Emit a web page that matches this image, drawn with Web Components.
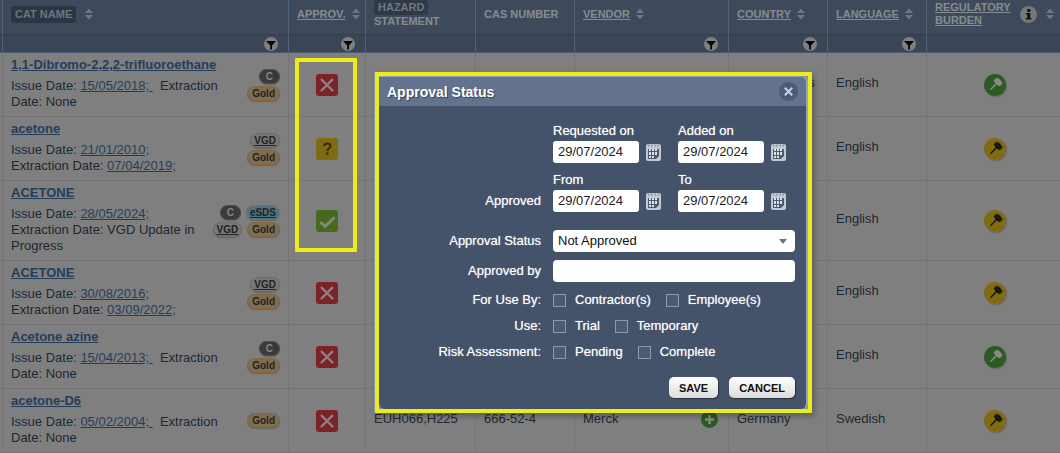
<!DOCTYPE html>
<html lang="en">
<head>
<meta charset="utf-8">
<title>Approval Status</title>
<style>
    body
    {
        margin: 0;
        background: #7f7f7f;
        font: 13px/16px "Liberation Sans", Arial, sans-serif;
        color: #1e2833;
        overflow: hidden;
    }
</style>
</head>
<body>
<app-view></app-view>
<script>
// Small rounded tag shown at the right of a product name
class TagPill extends HTMLElement
{
    constructor()
    {
        super();
        this.root = this.attachShadow({mode: "open"});
    }
    connectedCallback()
    {
        this.root.innerHTML = `
            <style>
                :host
                {
                    display: block;
                    box-sizing: border-box;
                    height: 15px;
                    padding: 0 4px;
                    border: 1px solid #6c6c6c;
                    border-radius: 8px;
                    background: #777;
                    color: #222;
                    font-size: 10px;
                    font-weight: bold;
                    line-height: 13px;
                    box-shadow: 0 1px 1px rgba(0, 0, 0, 0.2);
                }
                :host([kind="C"]) { background: #3a3a3a; border-color: #4a4a4a; color: #858585; padding: 0 6px; }
                :host([kind="Gold"]) { background: #7d6e50; border-color: #8a6243; }
                :host([kind="eSDS"]) { background: #4d7480; border-color: #5f7a84; text-decoration: underline; padding: 0 3px; }
                :host([kind="VGD"]) { text-decoration: underline; padding: 0 3px; }
            </style>
            <slot></slot>
        `;
    }
}

// Square approval state icon
class ApprovalIcon extends HTMLElement
{
    constructor()
    {
        super();
        this.root = this.attachShadow({mode: "open"});
    }
    connectedCallback()
    {
        const icons = {
            no: `<rect width="22" height="22" rx="3" fill="#7d2328"/>
                 <path d="M5 5L17 17M17 5L5 17" stroke="#8e8383" stroke-width="2.4"/>`,
            ask: `<rect width="22" height="22" rx="3" fill="#806c10"/>
                 <path d="M8 8.2Q8.2 5.6 11.2 5.6Q14.4 5.6 14.4 8Q14.4 9.4 12.9 10.5Q11.4 11.5 11.4 13" fill="none" stroke="#332c10" stroke-width="2"/>
                 <rect x="10.2" y="14.4" width="2.3" height="2.3" fill="#332c10"/>`,
            yes: `<rect width="22" height="22" rx="3" fill="#446b20"/>
                 <path d="M4.5 12L9 16.5L18.5 7.5" fill="none" stroke="#858b80" stroke-width="2.8"/>`
        };
        this.root.innerHTML = `
            <style>
                :host { display: block; width: 22px; height: 22px; margin: 0 auto; }
                svg { display: block; }
            </style>
            <svg width="22" height="22">${icons[this.getAttribute("state")]}</svg>
        `;
    }
}

// Round gavel icon
class BurdenIcon extends HTMLElement
{
    constructor()
    {
        super();
        this.root = this.attachShadow({mode: "open"});
    }
    connectedCallback()
    {
        const low = this.getAttribute("level") === "low";
        const fill = low ? "#2b5a22" : "#806c10";
        const ink = low ? "#858b82" : "#1b1808";
        this.root.innerHTML = `
            <style>
                :host { display: block; width: 22px; height: 22px; margin: 0 auto; border-radius: 50%; box-shadow: 1px 1px 1px rgba(0, 0, 0, 0.2); }
                svg { display: block; }
            </style>
            <svg width="22" height="22">
                <circle cx="11" cy="11" r="11" fill="${fill}"/>
                <path d="M6.4 15.8L13 9" stroke="${ink}" stroke-width="1.6"/>
                <path d="M9.4 6.6L12.8 3.4L14.2 4.6L14.8 4.6L17.4 7.2L17.4 7.8L18.8 9.2L15.6 12.6L14.2 11.2L13.6 11.2L10.8 8.4L10.8 8Z" fill="${ink}"/>
            </svg>
        `;
    }
}

// Column heading: label, optional info button, sort arrows
class ColumnHead extends HTMLElement
{
    constructor()
    {
        super();
        this.root = this.attachShadow({mode: "open"});
    }
    connectedCallback()
    {
        const info = this.hasAttribute("info") ? `
            <svg class="info" width="17" height="17">
                <circle cx="8.5" cy="8.5" r="8.5" fill="#777"/>
                <circle cx="8.8" cy="4.4" r="1.7" fill="#111"/>
                <path d="M6 7H10.3V12H11.4V13.6H5.9V12H7.2V8.6H6Z" fill="#111"/>
            </svg>` : "";
        const sort = this.hasAttribute("sort") ? `
            <svg width="8" height="12">
                <path d="M0 5L4 0.5L8 5ZM0 7L4 11.5L8 7Z" fill="#68788a"/>
            </svg>` : "";
        this.root.innerHTML = `
            <style>
                :host { display: flex; align-items: center; gap: 6px; font-size: 11px; line-height: 13px; }
                :host([wide]) { gap: 9px; }
                svg { display: block; flex: none; }
            </style>
            <slot></slot>${info}${sort}
        `;
    }
}

class FilterButton extends HTMLElement
{
    constructor()
    {
        super();
        this.root = this.attachShadow({mode: "open"});
    }
    connectedCallback()
    {
        this.root.innerHTML = `
            <style>
                :host { display: block; width: 14px; height: 14px; margin-left: auto; }
                button { display: block; padding: 0; border: 0; background: none; }
                svg { display: block; }
            </style>
            <button type="button" aria-label="Filter">
                <svg width="14" height="14">
                    <circle cx="7" cy="7" r="7" fill="#7f7f7f"/>
                    <path d="M2 4H12L8 8.4V12.4H6.2V8.4Z" fill="#050505"/>
                </svg>
            </button>
        `;
    }
}

// Product list
class ProductTable extends HTMLElement
{
    constructor()
    {
        super();
        this.root = this.attachShadow({mode: "open"});
    }
    connectedCallback()
    {
        const link = (text) => `<a href="#">${text}</a>`;
        const rows = [
            {
                name: "1,1-Dibromo-2,2,2-trifluoroethane",
                dates: `Issue Date: ${link("15/05/2018;&nbsp;")} &nbsp;Extraction<br>Date: None`,
                tags: [["C"], ["Gold"]], state: "no", country: "United States", language: "English", level: "low"
            },
            {
                name: "acetone",
                dates: `Issue Date: ${link("21/01/2010;")}<br>Extraction Date: ${link("07/04/2019;")}`,
                tags: [["VGD"], ["Gold"]], state: "ask", language: "English", level: "high"
            },
            {
                name: "ACETONE",
                dates: `Issue Date: ${link("28/05/2024;")}<br>Extraction Date: VGD Update in Progress`,
                tags: [["C", "eSDS"], ["VGD", "Gold"]], state: "yes", language: "English", level: "high"
            },
            {
                name: "ACETONE",
                dates: `Issue Date: ${link("30/08/2016;")}<br>Extraction Date: ${link("03/09/2022;")}`,
                tags: [["VGD"], ["Gold"]], state: "no", language: "English", level: "high"
            },
            {
                name: "Acetone azine",
                dates: `Issue Date: ${link("15/04/2013;&nbsp;")} &nbsp;Extraction<br>Date: None`,
                tags: [["C"], ["Gold"]], state: "no", language: "English", level: "low"
            },
            {
                name: "acetone-D6",
                dates: `Issue Date: ${link("05/02/2004;&nbsp;")} &nbsp;Extraction<br>Date: None`,
                tags: [["Gold"]], state: "no", hazard: "EUH066,H225", cas: "666-52-4", vendor: "Merck",
                country: "Germany", language: "Swedish", level: "high"
            }
        ];
        const plus = `
            <svg width="17" height="17">
                <circle cx="8.5" cy="8.5" r="8.5" fill="#2b5a22"/>
                <path d="M8.5 4V13M4 8.5H13" stroke="#858b82" stroke-width="2.4"/>
            </svg>`;
        const body = rows.map(row => `
            <tr>
                <td></td>
                <td>
                    <div class="product">
                        <div class="text">
                            <a class="name" href="#">${row.name}</a>
                            <div>${row.dates}</div>
                        </div>
                        <div class="tags">
                            ${row.tags.map(line => `<div>${line.map(t => `<tag-pill kind="${t}">${t}</tag-pill>`).join("")}</div>`).join("")}
                        </div>
                    </div>
                </td>
                <td><approval-icon state="${row.state}"></approval-icon></td>
                <td class="plain">${row.hazard || ""}</td>
                <td class="plain">${row.cas || ""}</td>
                <td class="plain">${row.vendor ? `<div class="vendor">${row.vendor}${plus}</div>` : ""}</td>
                <td class="plain">${row.country || ""}</td>
                <td class="plain">${row.language}</td>
                <td><burden-icon level="${row.level}"></burden-icon></td>
            </tr>`).join("");

        this.root.innerHTML = `
            <style>
                :host { display: block; }
                table { width: 100%; table-layout: fixed; border-collapse: separate; border-spacing: 0; }
                th, td
                {
                    box-sizing: border-box;
                    padding: 0 8px;
                    border-right: 1px solid #747474;
                    border-bottom: 1px solid #747474;
                    text-align: left;
                    vertical-align: middle;
                }
                th:first-child, td:first-child { padding: 0; }
                th:last-child, td:last-child { border-right: 0; padding-right: 5px; }
                th
                {
                    height: 35px;
                    padding-bottom: 6px;
                    background: #3e4a5b;
                    border-right-color: #52647c;
                    border-bottom-color: #333f4e;
                    color: #878b90;
                }
                .filters td
                {
                    height: 18px;
                    padding: 0 10px 0 0;
                    background: #3a4656;
                    border-right-color: #52647c;
                    border-bottom-color: #4a5c77;
                }
                tbody td { height: 64px; }
                .plain { padding-bottom: 3px; }
                td a { color: #243e5a; }
                th a { color: inherit; }
                .mark { display: block; width: fit-content; padding: 2px 4px; border-radius: 3px; background: #2b3644; color: #6b7580; }
                .chip { padding: 1px 4px; display: block; width: fit-content; background: #2f3947; border-radius: 3px; color: #717880; }
                .product { display: flex; align-items: center; gap: 4px; }
                .text { flex: 1; padding: 4px 0 6px; }
                .name { display: block; width: fit-content; margin-bottom: 5px; font-weight: bold; white-space: nowrap; }
                .tags { flex: none; display: flex; flex-direction: column; gap: 2px; }
                .tags div { display: flex; justify-content: flex-end; gap: 5px; }
                .vendor { display: flex; align-items: center; justify-content: space-between; margin-right: 2px; }
            </style>
            <table>
                <colgroup>
                    <col style="width: 3px"><col style="width: 286px"><col style="width: 77px">
                    <col style="width: 110px"><col style="width: 99px"><col style="width: 154px">
                    <col style="width: 99px"><col style="width: 99px"><col style="width: 133px">
                </colgroup>
                <thead>
                    <tr>
                        <th></th>
                        <th><column-head sort wide><span class="mark">CAT NAME</span></column-head></th>
                        <th><column-head sort><a href="#">APPROV.</a></column-head></th>
                        <th><column-head><span><span class="chip">HAZARD</span>STATEMENT</span></column-head></th>
                        <th><column-head>CAS NUMBER</column-head></th>
                        <th><column-head sort><a href="#">VENDOR</a></column-head></th>
                        <th><column-head sort><a href="#">COUNTRY</a></column-head></th>
                        <th><column-head sort><a href="#">LANGUAGE</a></column-head></th>
                        <th><column-head sort info wide><a href="#">REGULATORY<br>BURDEN</a></column-head></th>
                    </tr>
                    <tr class="filters">
                        <td></td>
                        <td><filter-button></filter-button></td>
                        <td><filter-button></filter-button></td>
                        <td></td>
                        <td></td>
                        <td><filter-button></filter-button></td>
                        <td><filter-button></filter-button></td>
                        <td><filter-button></filter-button></td>
                        <td></td>
                    </tr>
                </thead>
                <tbody>${body}</tbody>
            </table>
        `;
    }
}

// Label, date input and calendar button
class DateField extends HTMLElement
{
    constructor()
    {
        super();
        this.root = this.attachShadow({mode: "open"});
    }
    connectedCallback()
    {
        this.root.innerHTML = `
            <style>
                :host { display: block; }
                label { display: block; margin-bottom: 2px; }
                div { display: flex; align-items: center; gap: 7px; }
                input
                {
                    box-sizing: border-box;
                    width: 86px;
                    height: 22px;
                    padding: 0 5px 2px;
                    border: 0;
                    border-radius: 3px;
                    background: #fff;
                    color: #222;
                    font: inherit;
                }
                button { padding: 0; border: 0; background: none; }
                svg { display: block; }
            </style>
            <label for="date">${this.getAttribute("label")}</label>
            <div>
                <input id="date" type="text" value="${this.getAttribute("value")}">
                <button type="button" aria-label="Choose date">
                    <svg width="15" height="18">
                        <path d="M0 3Q0 1 2 1H13Q15 1 15 3V16Q15 18 13 18H2Q0 18 0 16Z" fill="#c3c9d3"/>
                        <path d="M2 1.5h1.5v2h-1.5zM5 1.5h1.5v2h-1.5zM8.5 1.5h1.5v2h-1.5zM11.5 1.5h1.5v2h-1.5z" fill="#8b95a6"/>
                        <path d="M2 6H13V13L10 16H2Z" fill="#4c5a71"/>
                        <path d="M3 6h2v2h-2zM6 6h2v2h-2zM9 6h2v2h-2zM3 9h2v3h-2zM6 9h2v3h-2zM9 9h2v3h-2zM3 13h2v2h-2zM6 13h2v2h-2z" fill="#dfe3e9"/>
                    </svg>
                </button>
            </div>
        `;
    }
}

class TickBox extends HTMLElement
{
    constructor()
    {
        super();
        this.root = this.attachShadow({mode: "open"});
    }
    connectedCallback()
    {
        this.root.innerHTML = `
            <style>
                :host { display: block; }
                label { display: flex; align-items: center; gap: 9px; }
                input
                {
                    appearance: none;
                    box-sizing: border-box;
                    width: 13px;
                    height: 13px;
                    margin: 0;
                    border: 1px solid #8a9ab4;
                    background: #4c5b74;
                }
            </style>
            <label><input type="checkbox"><slot></slot></label>
        `;
    }
}

// Titled window with a body slot
class ModalWindow extends HTMLElement
{
    constructor()
    {
        super();
        this.root = this.attachShadow({mode: "open"});
    }
    connectedCallback()
    {
        this.root.innerHTML = `
            <style>
                :host
                {
                    display: block;
                    border-right: 2px solid #93a7c4;
                    border-radius: 0 8px 6px 6px;
                    background: #45536a;
                    color: #fff;
                }
                header
                {
                    display: flex;
                    align-items: center;
                    justify-content: space-between;
                    box-sizing: border-box;
                    height: 30px;
                    padding: 0 8px;
                    border-top: 1px solid #8ea3c2;
                    border-radius: 0 6px 0 0;
                    background: #63738e;
                }
                h2 { margin: 0; font-size: 14px; line-height: 16px; text-shadow: 1px 1px 1px #35425a; }
                button { padding: 0; border: 0; background: none; }
                svg { display: block; }
            </style>
            <header>
                <h2>${this.getAttribute("heading")}</h2>
                <button type="button" aria-label="Close">
                    <svg width="19" height="19">
                        <circle cx="9.5" cy="9.5" r="9.5" fill="#4c5b77"/>
                        <path d="M5.8 5.8L13.2 13.2M13.2 5.8L5.8 13.2" stroke="#c3ccda" stroke-width="2.2"/>
                    </svg>
                </button>
            </header>
            <slot></slot>
        `;
    }
}

class ApprovalForm extends HTMLElement
{
    constructor()
    {
        super();
        this.root = this.attachShadow({mode: "open"});
    }
    connectedCallback()
    {
        this.root.innerHTML = `
            <style>
                :host { display: block; text-shadow: 0 0 1px rgba(255, 255, 255, 0.6); }
                form
                {
                    display: grid;
                    grid-template-columns: 162px 1fr;
                    column-gap: 12px;
                    padding: 17px 11px 11px 0;
                }
                .side { align-self: end; text-align: right; line-height: 22px; }
                .dates { display: grid; grid-template-columns: 125px 1fr; margin-bottom: 9px; }
                .gap { margin-bottom: 18px; }
                .box { margin-bottom: 8px; }
                .ticks { margin-bottom: 10px; line-height: 16px; }
                .ticks:not(.side) { display: flex; gap: 15px; }
                .first { margin-top: 10px; }
                input, .select select
                {
                    box-sizing: border-box;
                    width: 100%;
                    height: 22px;
                    padding: 0 5px;
                    border: 0;
                    border-radius: 4px;
                    background: #fff;
                    color: #111;
                    font: inherit;
                }
                .select { display: grid; align-items: center; }
                .select > * { grid-area: 1 / 1; }
                .select select { appearance: none; }
                .select svg { justify-self: end; margin-right: 8px; pointer-events: none; }
                footer { grid-column: 1 / -1; display: flex; justify-content: flex-end; gap: 11px; padding-top: 7px; }
                footer button
                {
                    height: 21px;
                    padding: 0 10px;
                    border: 0;
                    border-radius: 5px;
                    background: linear-gradient(#fff, #dcdcdc);
                    box-shadow: 1px 1px 1px rgba(0, 0, 0, 0.4);
                    color: #111;
                    font: bold 11px/16px "Liberation Sans", Arial, sans-serif;
                }
            </style>
            <form>
                <span></span>
                <div class="dates">
                    <date-field label="Requested on" value="29/07/2024"></date-field>
                    <date-field label="Added on" value="29/07/2024"></date-field>
                </div>
                <span class="side gap">Approved</span>
                <div class="dates gap">
                    <date-field label="From" value="29/07/2024"></date-field>
                    <date-field label="To" value="29/07/2024"></date-field>
                </div>
                <label class="side box" for="status">Approval Status</label>
                <div class="select box">
                    <select id="status"><option>Not Approved</option></select>
                    <svg width="8" height="5"><path d="M0 0H8L4 5Z" fill="#63738e"/></svg>
                </div>
                <label class="side" for="by">Approved by</label>
                <input id="by" type="text">
                <span class="side ticks first">For Use By:</span>
                <div class="ticks first"><tick-box>Contractor(s)</tick-box><tick-box>Employee(s)</tick-box></div>
                <span class="side ticks">Use:</span>
                <div class="ticks"><tick-box>Trial</tick-box><tick-box>Temporary</tick-box></div>
                <span class="side ticks">Risk Assessment:</span>
                <div class="ticks"><tick-box>Pending</tick-box><tick-box>Complete</tick-box></div>
                <footer>
                    <button type="button">SAVE</button>
                    <button type="button">CANCEL</button>
                </footer>
            </form>
        `;
    }
}

class AppView extends HTMLElement
{
    constructor()
    {
        super();
        this.root = this.attachShadow({mode: "open"});
    }
    connectedCallback()
    {
        this.root.innerHTML = `
            <style>
                :host { display: block; position: relative; }
                .highlight { position: absolute; box-sizing: border-box; border: 4px solid #ecec1c; border-radius: 1px; }
                .column { left: 295px; top: 58px; width: 62px; height: 194px; }
                .popup { left: 375px; top: 72px; width: 437px; background: #8394ae; box-shadow: -1px 0 0 #8c9ab0, 2px 3px 6px rgba(0, 0, 0, 0.3); }
            </style>
            <product-table></product-table>
            <div class="highlight column"></div>
            <div class="highlight popup">
                <modal-window heading="Approval Status">
                    <approval-form></approval-form>
                </modal-window>
            </div>
        `;
    }
}

customElements.define("tag-pill", TagPill);
customElements.define("approval-icon", ApprovalIcon);
customElements.define("burden-icon", BurdenIcon);
customElements.define("column-head", ColumnHead);
customElements.define("filter-button", FilterButton);
customElements.define("product-table", ProductTable);
customElements.define("date-field", DateField);
customElements.define("tick-box", TickBox);
customElements.define("modal-window", ModalWindow);
customElements.define("approval-form", ApprovalForm);
customElements.define("app-view", AppView);
</script>
</body>
</html>
